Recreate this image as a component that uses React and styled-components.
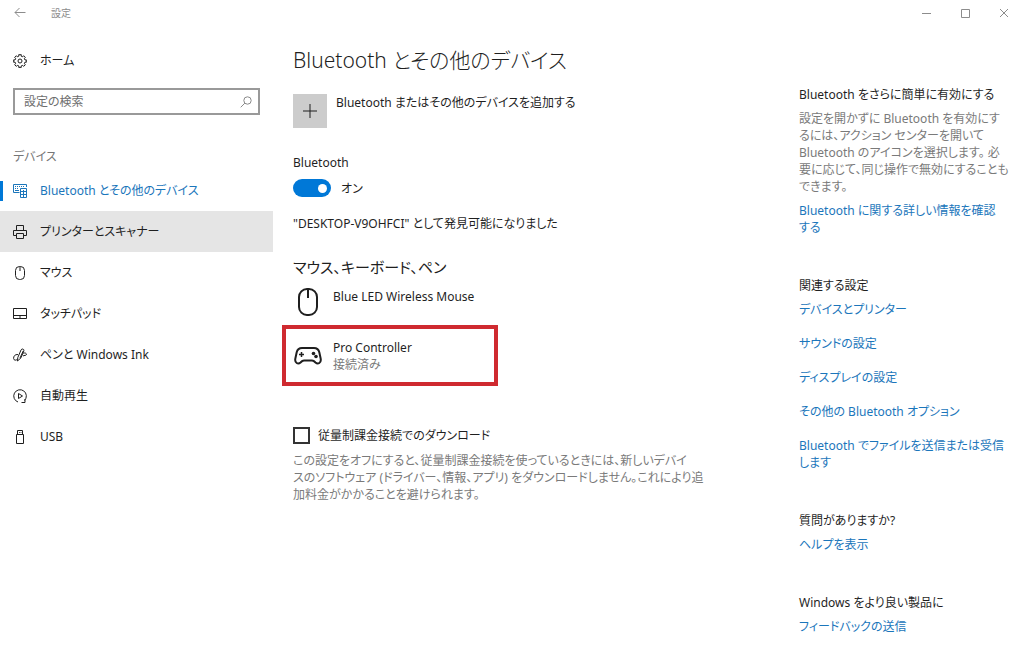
import React from "react";
import styled, { createGlobalStyle, css } from "styled-components";

const color = {
  text: "#1f1f1f",
  muted: "#7a7a7a",
  link: "#1b76bb",
  accent: "#0078d7",
  hover: "#e5e5e5",
};

const GlobalStyle = createGlobalStyle`
  * { box-sizing: border-box; }
  body {
    margin: 0;
    background: #fff;
    color: ${color.text};
    font-family: "Noto Sans", "Noto Sans CJK JP", sans-serif;
    font-size: 12px;
    line-height: 17px;
    font-feature-settings: "palt";
  }
  h1, h2, h3, p, ul { margin: 0; padding: 0; font-weight: 400; }
  ul { list-style: none; }
  button, input {
    font: inherit;
    font-feature-settings: inherit;
    color: inherit;
    margin: 0;
  }
`;

const Window = styled.div`
  min-height: 100vh;
  display: flex;
  flex-direction: column;
`;

const TitleBar = styled.header`
  display: flex;
  align-items: center;
  height: 26px;
  padding: 0 1px 0 13px;
  color: #8c8c8c;
`;

const TitleText = styled.span`
  flex: 1;
  padding-left: 24px;
  font-size: 10px;
`;

const IconButton = styled.button`
  display: grid;
  place-items: center;
  width: ${(p) => p.$width || 14}px;
  height: 26px;
  padding: 0;
  border: 0;
  background: none;
  color: inherit;
`;

const Body = styled.div`
  flex: 1;
  display: grid;
  grid-template-columns: 273px minmax(0, 1fr) 225px;
`;

const Sidebar = styled.nav`
  padding-top: 14px;
`;

const HomeLink = styled.a`
  display: flex;
  align-items: center;
  gap: 13px;
  height: 41px;
  padding-left: 13px;
  color: inherit;
  text-decoration: none;
`;

const SearchBox = styled.label`
  display: flex;
  align-items: center;
  height: 27px;
  margin: 7px 13px 0;
  padding: 0 6px 0 9px;
  border: 2px solid #999;
  color: #8a8a8a;
`;

const SearchInput = styled.input`
  flex: 1;
  min-width: 0;
  padding: 0;
  border: 0;
  outline: 0;
  background: none;
  &::placeholder { color: #6e6e6e; opacity: 1; }
`;

const SidebarHeading = styled.h2`
  margin: 33px 0 5px 13px;
  font-size: 12px;
  line-height: 17px;
  color: #767676;
`;

const NavLink = styled.a`
  display: flex;
  align-items: center;
  gap: 13px;
  height: 41px;
  padding-left: 13px;
  color: inherit;
  text-decoration: none;
  ${(p) => p.$hovered && css`background: ${color.hover};`}
  ${(p) => p.$current && css`
    color: ${color.link};
    padding-left: 0;
    gap: 0;
    &::before {
      content: "";
      width: 3px;
      height: 20px;
      margin-right: 10px;
      background: ${color.accent};
    }
    svg { margin-right: 13px; }
  `}
`;

const Main = styled.main`
  padding: 18px 20px 0;
`;

const PageTitle = styled.h1`
  font-size: 21px;
  line-height: 32px;
  font-weight: 300;
`;

const AddButton = styled.button`
  display: flex;
  gap: 9px;
  margin-top: 18px;
  padding: 0;
  border: 0;
  background: none;
  text-align: left;
`;

const AddTile = styled.span`
  display: grid;
  place-items: center;
  width: 34px;
  height: 34px;
  background: #ccc;
`;

const ToggleField = styled.div`
  display: flex;
  flex-direction: column;
  gap: 8px;
  margin-top: 26px;
`;

const ToggleRow = styled.div`
  display: flex;
  align-items: center;
  gap: 10px;
`;

const Switch = styled.input`
  appearance: none;
  display: flex;
  align-items: center;
  justify-content: flex-end;
  width: 38px;
  height: 18px;
  padding: 0 4px;
  border-radius: 9px;
  background: ${color.accent};
  &::before {
    content: "";
    width: 9px;
    height: 9px;
    border-radius: 50%;
    background: #fff;
  }
  &:not(:checked) {
    justify-content: flex-start;
    background: #999;
  }
`;

const Status = styled.p`
  margin-top: 18px;
`;

const SectionTitle = styled.h2`
  margin-top: 24px;
  font-size: 15px;
  line-height: 22px;
`;

const DeviceList = styled.ul`
  display: flex;
  flex-direction: column;
  align-items: flex-start;
  margin-left: -11px;
`;

const Device = styled.li`
  display: grid;
  grid-template-columns: 30px 1fr;
  align-items: ${(p) => (p.$highlighted ? "center" : "start")};
  gap: 10px;
  width: 216px;
  padding: 10px 0 9px 11px;
  ${(p) => p.$highlighted && css`
    height: 61px;
    padding: 0 0 0 7px;
    border: 4px solid #cf2a30;
  `}
`;

const DeviceIcon = styled.span`
  display: grid;
  place-items: center;
`;

const Muted = styled.p`
  color: ${color.muted};
`;

const CheckField = styled.label`
  display: flex;
  align-items: center;
  gap: 8px;
  margin-top: 41px;
`;

const Checkbox = styled.input`
  appearance: none;
  width: 17px;
  height: 17px;
  border: 2px solid #333;
  &:checked { background: ${color.accent}; }
`;

const CheckHelp = styled(Muted)`
  margin-top: 8px;
`;

const Aside = styled.aside`
  display: flex;
  flex-direction: column;
  gap: 41px;
  padding-top: 60px;
`;

const AsideSection = styled.section`
  display: flex;
  flex-direction: column;
  gap: 7px;
`;

const AsideTitle = styled.h3`
  font-size: 12px;
  line-height: 17px;
`;

const LinkList = styled.ul`
  display: flex;
  flex-direction: column;
  gap: 17px;
`;

const Link = styled.a`
  color: ${color.link};
  text-decoration: none;
`;

const Svg = ({ size = 14, height, box = "0 0 14 14", stroke = 1, children }) => (
  <svg
    width={size}
    height={height || size}
    viewBox={box}
    fill="none"
    stroke="currentColor"
    strokeWidth={stroke}
    aria-hidden="true"
  >
    {children}
  </svg>
);

const BackIcon = () => (
  <Svg><path d="M12.500 6.500H2M6.500 2 2 6.500 6.500 11" /></Svg>
);
const MinIcon = () => (
  <Svg size={10} box="0 0 10 10"><path d="M1 5.500h9" /></Svg>
);
const MaxIcon = () => (
  <Svg size={10} box="0 0 10 10"><path d="M1.500 1.500h8v8h-8z" /></Svg>
);
const CloseIcon = () => (
  <Svg size={10} box="0 0 10 10"><path d="m1 1 8 8M9 1 1 9" /></Svg>
);
const GearIcon = () => (
  <Svg>
    <path d="M5.900 2.100 5.700.700h2.600l-.200 1.400 1.600.700.900-1.100 1.800 1.800-1.100.900.700 1.600 1.300-.200v2.500l-1.300-.200-.700 1.600 1.100.900-1.800 1.800-.900-1.100-1.600.700.200 1.400H5.700l.200-1.400-1.600-.700-.900 1.100-1.800-1.800 1.100-.900-.700-1.600-1.300.200V5.800l1.300.200.700-1.600-1.100-.900 1.800-1.800.900 1.100z" />
    <circle cx="7" cy="7" r="2" />
  </Svg>
);
const SearchIcon = () => (
  <Svg size={12} box="0 0 12 12">
    <circle cx="7.500" cy="4.500" r="3.700" /><path d="M4.900 7.100.700 11.300" />
  </Svg>
);
const DevicesIcon = () => (
  <Svg>
    <path d="M6.500 8.500h-6v-8h13v2.500" />
    <path d="M2 2.500h1m1 0h1m1 0h1m1 0h1m1 0h1M2 4.500h1m1 0h1M2 6.500h4" />
    <path d="M7.500 4.500h6v9h-6z" />
    <path d="M7.500 7.500h6M10.500 6v7.500M7.500 10.500h6" />
  </Svg>
);
const PrinterIcon = () => (
  <Svg>
    <path d="M3.500 5.500v-5h7v5M3.500 10.500h-3v-5h13v5h-3" />
    <path d="M3.500 8.500h7v5h-7z" />
  </Svg>
);
const MouseIcon = () => (
  <Svg><rect x="2.500" y=".500" width="9" height="13" rx="4" /><path d="M7 .500V5" /></Svg>
);
const TouchpadIcon = () => (
  <Svg><path d="M.500 1.500h13v10H.500zM.500 8.500h13M7 8.500v3" /></Svg>
);
const PenIcon = () => (
  <Svg>
    <path d="M4.800 9.500 8 2C8.700.300 11.300.800 10.900 2.800L8 9.800 4.500 13zM7 10l3.200-7" />
    <path d="M5 6.500C1.800 6.200.500 8.300.600 10.500c.200 2 2.400 2.300 3.900.500M10.300 5.200c1.900-.700 3.600.300 3.100 1.500-.400 1-2.200.400-3.400 1.300" />
  </Svg>
);
const AutoplayIcon = () => (
  <Svg>
    <path d="M5 13A6.300 6.300 0 1 1 11.500 11.500" />
    <path d="M5.500 4.500v5l4-2.500zM8.500 13.500h3.500v-3.500" />
  </Svg>
);
const UsbIcon = () => (
  <Svg><path d="M4.500 4.500v-4h5v4M3.500 4.500h7v9h-7zM6 2.500h.800M7.600 2.500h.800" /></Svg>
);
const PlusIcon = () => (
  <Svg><path d="M7 0v14M0 7h14" /></Svg>
);
const BigMouseIcon = () => (
  <Svg size={20} height={28} box="0 0 20 28" stroke={2}>
    <rect x="1" y="1" width="18" height="26" rx="8" /><path d="M10 1v9" />
  </Svg>
);
const GamepadIcon = () => (
  <Svg size={28} height={20} box="0 0 28 20" stroke={2}>
    <path d="M8 2h12c3 0 4.600 1.400 5.300 4.300l1.400 6.500c.700 4-2.700 6-5.200 3.700-1.200-1.300-2-2-3.500-2h-8c-1.500 0-2.300.700-3.500 2-2.500 2.300-5.900.300-5.200-3.700l1.400-6.500C3.400 3.400 5 2 8 2z" />
    <path d="M7.500 6v5M5 8.500h5" strokeWidth="1.500" />
    <g fill="currentColor" stroke="none">
      <circle cx="19.500" cy="7.500" r="1.800" /><circle cx="22" cy="10.500" r="1.800" />
    </g>
  </Svg>
);

const navItems = [
  { label: "Bluetooth とその他のデバイス", Icon: DevicesIcon, current: true },
  { label: "プリンターとスキャナー", Icon: PrinterIcon, hovered: true },
  { label: "マウス", Icon: MouseIcon },
  { label: "タッチパッド", Icon: TouchpadIcon },
  { label: "ペンと Windows Ink", Icon: PenIcon },
  { label: "自動再生", Icon: AutoplayIcon },
  { label: "USB", Icon: UsbIcon },
];

const relatedLinks = [
  "デバイスとプリンター",
  "サウンドの設定",
  "ディスプレイの設定",
  "その他の Bluetooth オプション",
];

export default function App() {
  return (
    <Window lang="ja">
      <GlobalStyle />
      <TitleBar>
        <IconButton aria-label="戻る"><BackIcon /></IconButton>
        <TitleText>設定</TitleText>
        <IconButton $width={39} aria-label="最小化"><MinIcon /></IconButton>
        <IconButton $width={39} aria-label="最大化"><MaxIcon /></IconButton>
        <IconButton $width={39} aria-label="閉じる"><CloseIcon /></IconButton>
      </TitleBar>
      <Body>
        <Sidebar>
          <HomeLink href="#home"><GearIcon />ホーム</HomeLink>
          <SearchBox>
            <SearchInput type="text" placeholder="設定の検索" aria-label="設定の検索" />
            <SearchIcon />
          </SearchBox>
          <SidebarHeading>デバイス</SidebarHeading>
          <ul>
            {navItems.map(({ label, Icon, current, hovered }) => (
              <li key={label}>
                <NavLink
                  href="#"
                  $current={current}
                  $hovered={hovered}
                  aria-current={current ? "page" : undefined}
                >
                  <Icon />{label}
                </NavLink>
              </li>
            ))}
          </ul>
        </Sidebar>
        <Main>
          <PageTitle>Bluetooth とその他のデバイス</PageTitle>
          <AddButton>
            <AddTile><PlusIcon /></AddTile>
            Bluetooth またはその他のデバイスを追加する
          </AddButton>
          <ToggleField>
            <label htmlFor="bluetooth">Bluetooth</label>
            <ToggleRow>
              <Switch id="bluetooth" type="checkbox" role="switch" defaultChecked />
              <span>オン</span>
            </ToggleRow>
          </ToggleField>
          <Status>"DESKTOP-V9OHFCI" として発見可能になりました</Status>
          <SectionTitle>マウス、キーボード、ペン</SectionTitle>
          <DeviceList>
            <Device>
              <DeviceIcon><BigMouseIcon /></DeviceIcon>
              <p>Blue LED Wireless Mouse</p>
            </Device>
            <Device $highlighted>
              <DeviceIcon><GamepadIcon /></DeviceIcon>
              <div>
                <p>Pro Controller</p>
                <Muted>接続済み</Muted>
              </div>
            </Device>
          </DeviceList>
          <CheckField>
            <Checkbox type="checkbox" />
            従量制課金接続でのダウンロード
          </CheckField>
          <CheckHelp>
            この設定をオフにすると、従量制課金接続を使っているときには、新しいデバイ<br />
            スのソフトウェア (ドライバー、情報、アプリ) をダウンロードしません。これにより追<br />
            加料金がかかることを避けられます。
          </CheckHelp>
        </Main>
        <Aside>
          <AsideSection>
            <AsideTitle>Bluetooth をさらに簡単に有効にする</AsideTitle>
            <Muted>
              設定を開かずに Bluetooth を有効にす<br />
              るには、アクション センターを開いて<br />
              Bluetooth のアイコンを選択します。 必<br />
              要に応じて、同じ操作で無効にすることも<br />
              できます。
            </Muted>
            <Link href="#">Bluetooth に関する詳しい情報を確認<br />する</Link>
          </AsideSection>
          <AsideSection>
            <AsideTitle>関連する設定</AsideTitle>
            <LinkList>
              {relatedLinks.map((label) => (
                <li key={label}><Link href="#">{label}</Link></li>
              ))}
              <li><Link href="#">Bluetooth でファイルを送信または受信<br />します</Link></li>
            </LinkList>
          </AsideSection>
          <AsideSection>
            <AsideTitle>質問がありますか?</AsideTitle>
            <Link href="#">ヘルプを表示</Link>
          </AsideSection>
          <AsideSection>
            <AsideTitle>Windows をより良い製品に</AsideTitle>
            <Link href="#">フィードバックの送信</Link>
          </AsideSection>
        </Aside>
      </Body>
    </Window>
  );
}
